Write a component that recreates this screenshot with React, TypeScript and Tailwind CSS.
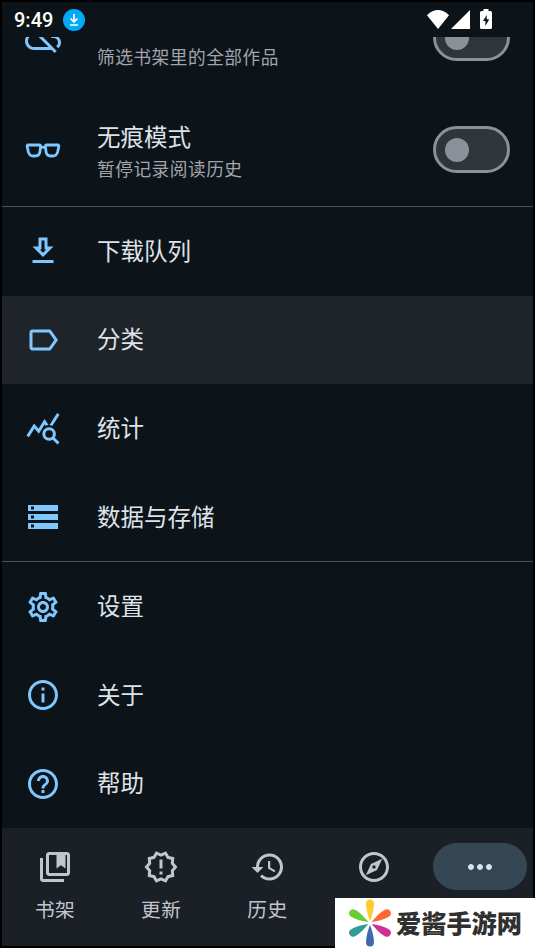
import type { ReactNode } from "react";
import {
  MdHelpOutline,
  MdHistory,
  MdLabelOutline,
  MdMoreHoriz,
  MdOutlineCloudOff,
  MdOutlineExplore,
  MdOutlineInfo,
  MdOutlineNewReleases,
  MdOutlineSettings,
  MdQueryStats,
  MdStorage,
} from "react-icons/md";

function GlassesIcon() {
  return (
    <svg viewBox="0 0 36 36" className="size-9" fill="none" stroke="currentColor" strokeWidth="2.8" strokeLinejoin="round">
      <path d="M3.2 13H14.6Q15.8 13 15.6 14.6L15 19.5Q14.4 24 10.4 24H8Q4.4 24 3.4 20L2.2 14.6Q1.9 13 3.2 13Z" />
      <path d="M32.8 13H21.4Q20.2 13 20.4 14.6L21 19.5Q21.6 24 25.6 24H28Q31.6 24 32.6 20L33.8 14.6Q34.1 13 32.8 13Z" />
      <path d="M15.4 15.8Q18 14.4 20.6 15.8" />
    </svg>
  );
}

function DownloadIcon() {
  return (
    <svg viewBox="0 0 24 24" className="size-9" fill="currentColor">
      <path d="M19 9h-4V3H9v6H5l7 7 7-7zm-8 2V5h2v6h1.17L12 13.17 9.83 11H11zm-6 7h14v2H5z" />
    </svg>
  );
}

function ShelfIcon() {
  return (
    <svg viewBox="0 0 24 24" className="size-9" fill="currentColor">
      <path d="M4 6H2v14c0 1.1.9 2 2 2h14v-2H4V6z" />
      <path d="M20 2H8c-1.1 0-2 .9-2 2v12c0 1.1.9 2 2 2h12c1.1 0 2-.9 2-2V4c0-1.1-.9-2-2-2zm0 14H8V4h5v9l3-2.25L19 13V4h1v12z" />
    </svg>
  );
}

function StatusBar() {
  return (
    <header className="flex h-[35px] shrink-0 items-center pl-3 pr-[41px] text-white">
      <span className="w-[39px] font-['Roboto',sans-serif] text-[20px] font-medium leading-none">9:49</span>
      <svg viewBox="0 0 22 22" className="ml-2.5 size-[22px]">
        <circle cx="11" cy="11" r="11" fill="#03a9f9" />
        <path d="M11 5v7.5M7.5 9.5l3.5 3.5 3.5-3.5M7 16h8" fill="none" stroke="#fff" strokeWidth="1.7" />
      </svg>
      <div className="ml-auto flex items-center">
        <svg viewBox="0 0 22 19" className="h-[19px] w-[22px]" fill="currentColor">
          <path d="M0 5.2Q11-5 22 5.2L11 19Z" />
        </svg>
        <svg viewBox="0 0 18 18" className="ml-0.5 h-[19px] w-[19px]" fill="currentColor">
          <path d="M18 0V18H0Z" />
        </svg>
        <svg viewBox="0 0 12 20" className="ml-2.5 h-5 w-3 -translate-y-px" fill="currentColor">
          <path d="M3.5 0H8.5V2H10.5Q12 2 12 3.5V18.5Q12 20 10.5 20H1.5Q0 20 0 18.5V3.5Q0 2 1.5 2H3.5Z" />
          <path d="M7 5.5 3 12H5.4V17L9.2 10.3H6.7V5.5Z" fill="#0d1419" />
        </svg>
      </div>
    </header>
  );
}

function Switch() {
  return (
    <div className="-mt-px flex h-[47px] w-[77px] items-center rounded-full border-3 border-[#8b9198] bg-[#30343b] pl-[9px]">
      <div className="size-6 rounded-full bg-[#8b9198]" />
    </div>
  );
}

function SwitchRow({ icon, title, subtitle }: { icon: ReactNode; title?: string; subtitle: string }) {
  return (
    <div className="flex h-28 shrink-0 items-center pl-[23px] pr-[23px]">
      <span className="text-[#7ec7ff]">{icon}</span>
      <div className="ml-9 flex-1 pt-1">
        <p className="h-8 text-[23.5px] leading-8 text-[#dfe2e9]">{title}</p>
        <p className="h-8 text-[17.7px] leading-8 tracking-[0.5px] text-[#a2a5ac]">{subtitle}</p>
      </div>
      <Switch />
    </div>
  );
}

const tools = [
  { label: "下载队列", icon: <DownloadIcon /> },
  { label: "分类", icon: <MdLabelOutline size={36} />, active: true },
  { label: "统计", icon: <MdQueryStats size={36} /> },
  { label: "数据与存储", icon: <MdStorage size={36} /> },
];

const general = [
  { label: "设置", icon: <MdOutlineSettings size={36} /> },
  { label: "关于", icon: <MdOutlineInfo size={36} /> },
  { label: "帮助", icon: <MdHelpOutline size={36} /> },
];

function MenuRow({ icon, label, active }: { icon: ReactNode; label: string; active?: boolean }) {
  return (
    <div className={`flex h-[88.6px] shrink-0 items-center pl-[23px] ${active ? "bg-[#1f242b]" : ""}`}>
      <span className="text-[#7ec7ff]">{icon}</span>
      <span className="ml-9 pb-[3px] text-[23.5px] leading-8 text-[#dfe2e9]">{label}</span>
    </div>
  );
}

const tabs = [
  { label: "书架", icon: <ShelfIcon /> },
  { label: "更新", icon: <MdOutlineNewReleases size={36} /> },
  { label: "历史", icon: <MdHistory size={36} /> },
  { label: "", icon: <MdOutlineExplore size={36} /> },
  { label: "", icon: <MdMoreHoriz size={36} />, active: true },
];

const petals = [
  { color: "#ffca32", angle: 0 },
  { color: "#ff6634", angle: 60 },
  { color: "#cf3097", angle: 120 },
  { color: "#4169b2", angle: 180 },
  { color: "#329a98", angle: 240 },
  { color: "#68cc32", angle: 300 },
];

function Watermark() {
  return (
    <div className="absolute -bottom-0.5 -right-0.5 flex h-[50px] w-[200px] items-center bg-white pl-[13px]">
      <svg viewBox="0 0 44 48" className="h-12 w-11">
        {petals.map((petal) => (
          <path
            key={petal.angle}
            d="M22 22C20 17 18 10 18 5Q18 .5 22 .5T26 5C26 10 24 17 22 22Z"
            fill={petal.color}
            transform={`rotate(${petal.angle} 22 24)`}
          />
        ))}
      </svg>
      <span className="ml-1 whitespace-nowrap text-[25.2px] font-black leading-none text-[#303030]">爱酱手游网</span>
    </div>
  );
}

export default function App() {
  return (
    <div className="h-[948px] w-[535px] overflow-hidden bg-black">
      <div className="relative flex h-full flex-col border-2 border-black bg-[#0d1419] font-['Noto_Sans_CJK_SC',sans-serif]">
        <StatusBar />
        <main className="flex min-h-0 flex-1 flex-col overflow-hidden">
          <div className="-mt-[55px] shrink-0">
            <SwitchRow icon={<MdOutlineCloudOff size={36} />} subtitle="筛选书架里的全部作品" />
            <SwitchRow icon={<GlassesIcon />} title="无痕模式" subtitle="暂停记录阅读历史" />
          </div>
          <div className="shrink-0 border-t border-[#4d5157]">
            {tools.map((item) => (
              <MenuRow key={item.label} {...item} />
            ))}
          </div>
          <div className="shrink-0 border-t border-[#4d5157]">
            {general.map((item) => (
              <MenuRow key={item.label} {...item} />
            ))}
          </div>
        </main>
        <nav className="flex h-[118px] shrink-0 bg-[#1b1f26] pt-[15px] text-[#c1c6ce]">
          {tabs.map((tab, index) => (
            <div key={index} className="flex flex-1 flex-col items-center">
              <div
                className={`flex h-[47px] w-[94px] items-center justify-center rounded-full ${
                  tab.active ? "bg-[#354755] text-[#d2e5f5]" : ""
                }`}
              >
                {tab.icon}
              </div>
              <span className="mt-[3px] text-[19.7px] leading-8 tracking-[0.5px]">{tab.label}</span>
            </div>
          ))}
        </nav>
        <Watermark />
      </div>
    </div>
  );
}
